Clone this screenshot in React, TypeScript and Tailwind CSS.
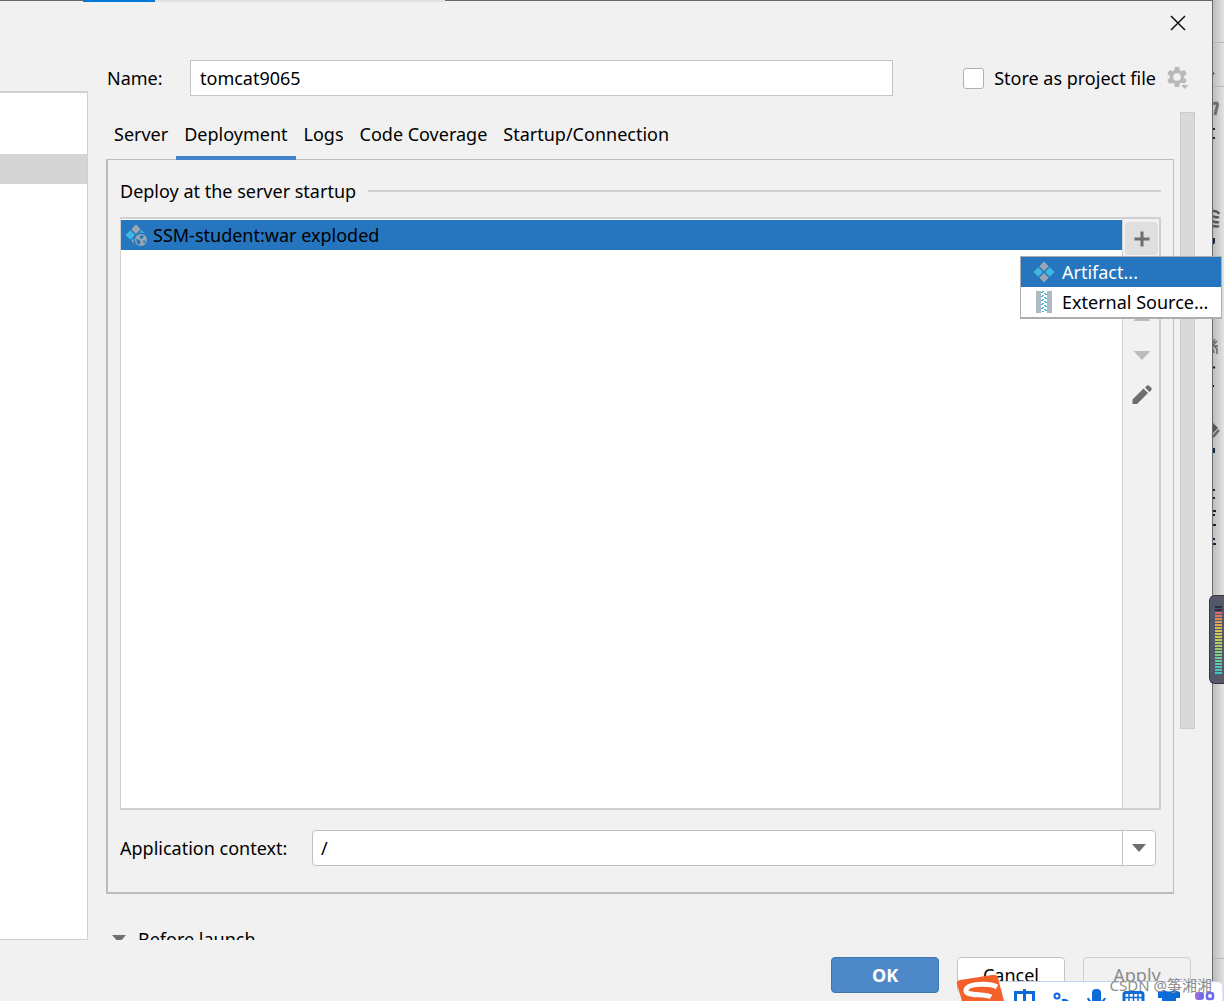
import { useState, type ReactNode } from "react";

const tabs = ["Server", "Deployment", "Logs", "Code Coverage", "Startup/Connection"];

const meterColors = [
  "bg-[#2b2e3d]",
  "bg-[#2b2e3d]",
  "bg-[#e0686a]",
  "bg-[#e07a62]",
  "bg-[#df8e58]",
  "bg-[#dd9e50]",
  "bg-[#dcab4c]",
  "bg-[#dab54a]",
  "bg-[#d8bf4a]",
  "bg-[#d2c74c]",
  "bg-[#c8cb50]",
  "bg-[#bccd56]",
  "bg-[#b0cd5e]",
  "bg-[#a4cd66]",
  "bg-[#98cd70]",
  "bg-[#8ccc7a]",
  "bg-[#80cb86]",
  "bg-[#74ca92]",
  "bg-[#68c99e]",
  "bg-[#5cc8aa]",
  "bg-[#50c7b4]",
  "bg-[#48c6bc]",
  "bg-[#44c6c0]",
];

const ArtifactIcon = ({ exploded = false }: { exploded?: boolean }) => (
  <svg className="size-[22px] shrink-0" viewBox="0 0 22 22">
    <path d="M11 .5l4.700 4.700L11 9.900 6.300 5.200z" fill="#9aa7b0" />
    <path d="M5.300 6.200l4.800 4.800-4.800 4.800L.5 11z" fill="#40b6e0" />
    <path d="M16.700 6.200l4.800 4.800-4.800 4.800-4.800-4.800z" fill="#40b6e0" />
    <path d="M11 12.100l4.700 4.700L11 21.500l-4.700-4.700z" fill="#9aa7b0" />
    {exploded && (
      <>
        <circle cx="16" cy="16" r="7.500" fill="#2675bf" />
        <circle cx="16" cy="16" r="6" fill="#9aa7b0" />
        <path
          d="M11.500 14.500l3 1.500 1 2-1 3c-2-.6-3.500-3-3-6.500zM16 11.200l3 .8-1.500 2.500-2 .5-1-2zM18 16.500l3 .5-2 3z"
          fill="#2675bf"
        />
      </>
    )}
  </svg>
);

const ArchiveIcon = () => (
  <svg className="size-[22px] shrink-0" viewBox="0 0 22 22">
    <path d="M3 0h5v22H3zM14 0h5v22h-5z" fill="#aeb9c0" />
    <path
      d="M9 .5h2M11 2.500h2M9 4.500h2M11 6.500h2M9 8.500h2M11 10.500h2M9 12.500h2M11 14.500h2M9 16.500h2M11 18.500h2M9 20.500h2M8 1.500h2M12 3.500h2M8 5.500h2M12 7.500h2M8 9.500h2M12 11.500h2M8 13.500h2M12 15.500h2M8 17.500h2M12 19.500h2"
      fill="none"
      stroke="#40b6e0"
      strokeWidth="1"
    />
  </svg>
);

const GearIcon = () => (
  <svg className="size-[22px]" viewBox="0 0 22 22">
    <g fill="#b9b9b9">
      {[0, 60, 120].map((angle) => (
        <rect key={angle} x="7.500" y="0" width="5" height="20" rx="1" transform={`rotate(${angle} 10 10)`} />
      ))}
      <circle cx="10" cy="10" r="7.300" />
    </g>
    <circle cx="10" cy="10" r="3.800" fill="#f1f1f1" />
    <path d="M12.500 16.500h10L17.500 22z" fill="#f1f1f1" />
    <path d="M14 18h7.500l-3.700 4z" fill="#b9b9b9" />
  </svg>
);

interface ToolButtonProps {
  label: string;
  active?: boolean;
  onClick?: () => void;
  children: ReactNode;
}

const ToolButton = ({ label, active = false, onClick, children }: ToolButtonProps) => (
  <button
    type="button"
    aria-label={label}
    onClick={onClick}
    className={`flex h-[33px] w-full items-center justify-center rounded ${active ? "bg-[#dfdfdf]" : ""}`}
  >
    <svg className="size-5" viewBox="0 0 20 20">
      {children}
    </svg>
  </button>
);

const AddMenu = () => (
  <ul className="absolute top-[34px] -right-16 z-20 w-[202px] border border-b-2 border-[#adadad] bg-white">
    <li>
      <button type="button" className="flex h-[30px] w-full items-center gap-[7px] bg-[#2675bf] pl-3 text-white">
        <ArtifactIcon />
        Artifact...
      </button>
    </li>
    <li>
      <button type="button" className="flex h-[30px] w-full items-center gap-[7px] pl-3">
        <ArchiveIcon />
        External Source...
      </button>
    </li>
  </ul>
);

const DeploymentPanel = () => {
  const [menuOpen, setMenuOpen] = useState(true);

  return (
    <section className="-mt-px flex min-h-0 flex-1 flex-col border border-b-2 border-l-2 border-[#bdbdbd] px-3 pt-[17px] pb-[26px]">
      <div className="flex items-center gap-3">
        <h2 className="leading-7">Deploy at the server startup</h2>
        <div className="h-[2px] flex-1 bg-[#d0d0d0]" />
      </div>

      <div className="mt-3 flex min-h-0 flex-1 border-2 border-l border-[#d0d0d0] bg-white">
        <ul className="flex-1 pt-px">
          <li className="flex h-[30px] items-center gap-[6px] bg-[#2675bf] pl-1">
            <ArtifactIcon exploded />
            SSM-student:war exploded
          </li>
        </ul>
        <div className="flex w-[37px] flex-col gap-[6px] border-l border-[#d0d0d0] bg-[#f1f1f1] pt-[3px] pr-px pl-[2px]">
          <div className="relative">
            <ToolButton label="Add" active onClick={() => setMenuOpen(!menuOpen)}>
              <path d="M8.500 2.500h3v6h6v3h-6v6h-3v-6h-6v-3h6z" fill="#6e6e6e" />
            </ToolButton>
            {menuOpen && <AddMenu />}
          </div>
          <ToolButton label="Remove">
            <path d="M2.500 8.500h15v3h-15z" fill="#6e6e6e" />
          </ToolButton>
          <ToolButton label="Move up">
            <path d="M1.500 14h17L10 5z" fill="#bcbcbc" />
          </ToolButton>
          <ToolButton label="Move down">
            <path d="M1.500 5h17L10 14z" fill="#bcbcbc" />
          </ToolButton>
          <ToolButton label="Edit">
            <path d="M.5 14.500L11.500 3.500l4.500 4.500L5 19H.5zM13 2.500l1.500-1.500q1.500-1.500 3 0l1.500 1.500q1.500 1.500 0 3L17.500 7z" fill="#6e6e6e" />
          </ToolButton>
        </div>
      </div>

      <div className="mt-5 mr-[5px] flex items-center">
        <label htmlFor="context" className="w-48 shrink-0">
          Application context:
        </label>
        <div className="flex h-9 flex-1 rounded border border-[#c0c0c0] bg-white">
          <input id="context" defaultValue="/" className="min-w-0 flex-1 rounded px-2 outline-none" />
          <button
            type="button"
            aria-label="Show contexts"
            className="flex w-[33px] items-center justify-center border-l border-[#c0c0c0]"
          >
            <svg className="h-2 w-[14px]" viewBox="0 0 14 8">
              <path d="M0 0h14L7 8z" fill="#6e6e6e" />
            </svg>
          </button>
        </div>
      </div>
    </section>
  );
};

// Sliver of the editor window that stays visible beside the dialog
const EditorEdge = () => (
  <div className="w-[11px] shrink-0 bg-linear-to-r from-[#bdbdbd] to-[#e2e2e2]">
    <svg className="h-[960px] w-[11px]" viewBox="0 0 11 960">
      <path d="M0 42.500h11M0 86.500h11M0 958.500h11" stroke="#b4b4b4" />
      <path d="M0 72l2 1.500-2 1.500z" fill="#555" />
      <path d="M0 104q6-3 4 3l-2 8" fill="none" stroke="#6e6e6e" strokeWidth="3" />
      <path d="M0 211q5 0 6 3M0 216q4 2 6 1M0 221q4 2 6 1M0 226q4 1 6 0" fill="none" stroke="#555" strokeWidth="2.500" />
      <path d="M0 343l2-4M0 345l4-4M0 346h5M1 346l3 3v5M0 349l1 4" fill="none" stroke="#666" strokeWidth="1.500" />
      <path d="M0 423l5 5-5 5z" fill="#555" />
      <path d="M0 437l6-7" stroke="#666" strokeWidth="2.500" />
      <path
        d="M0 129h2M0 138h2M1 238v4l-1 2M0 367l2 1M0 386h1M1 448v5M0 490h2M0 498h2M0 511h3M0 515h2M0 525h3M0 539h2M0 544h3"
        fill="none"
        stroke="#0b2545"
        strokeWidth="2"
      />
    </svg>
  </div>
);

const InputMethodBar = () => (
  <div className="absolute right-0 bottom-0 z-30 w-[268px]">
    <svg className="h-[26px] w-full" viewBox="0 0 268 26">
      <defs>
        <linearGradient id="toolbox" x1="0" x2="1">
          <stop offset="0" stopColor="#b06ae0" />
          <stop offset="1" stopColor="#5b6cf0" />
        </linearGradient>
      </defs>
      <path d="M10 26V6.500h251q6 0 6 6V26" fill="#fff" stroke="#bfd3ee" />
      <path d="M1 9Q0 6 4 5L36 0q5-1 6 3l6 23H6z" fill="#f4602a" />
      <path d="M41 12c-7-4-30-4-31 3s19 3 25 7" fill="none" stroke="#fff" strokeWidth="5" />
      <path d="M59.500 26v-8.500h18V26M68.500 14v12" fill="none" stroke="#0b6bd8" strokeWidth="3" />
      <circle cx="101" cy="21" r="2.500" fill="none" stroke="#0b6bd8" strokeWidth="2" />
      <path d="M106 24q4-1 7 2h-7z" fill="#0b6bd8" />
      <rect x="136" y="14" width="9" height="16" rx="4" fill="#0b6bd8" />
      <path d="M132 23q1 5 8 5t9-5" fill="none" stroke="#0b6bd8" strokeWidth="2" />
      <rect x="168" y="17.500" width="19" height="12" rx="2" fill="none" stroke="#0b6bd8" strokeWidth="3" />
      <path d="M173 18v8M177.500 18v8M182 18v8M168 22.500h19" stroke="#0b6bd8" strokeWidth="1.500" />
      <path d="M202 17l6-2q5 3 10 0l6 2v6h-4v3h-14v-3h-4z" fill="#0b6bd8" />
      <rect x="239" y="17" width="9" height="8" rx="3" fill="url(#toolbox)" />
      <rect x="251" y="18" width="6" height="6" rx="2" fill="none" stroke="#6a68ee" strokeWidth="2.500" />
    </svg>
  </div>
);

export default function App() {
  const [activeTab, setActiveTab] = useState("Deployment");

  return (
    <div className="relative flex h-screen overflow-hidden bg-[#e0e0e0] font-['Noto_Sans','Noto_Sans_CJK_SC',sans-serif] text-[18px] leading-6 text-black">
      <main className="relative z-10 flex min-w-0 flex-1 flex-col border-t border-r border-[#6a6a6a] bg-[#f1f1f1]">
        <div className="absolute -top-px left-[83px] flex h-[2px] w-[362px] bg-[#e2e2e2]">
          <div className="w-[72px] bg-[#0078d7]" />
        </div>

        <div className="flex min-h-0 flex-1">
          <aside className="flex w-[88px] shrink-0 flex-col pt-[90px]">
            <div className="flex-1 border border-t-2 border-l-0 border-[#d0d0d0] bg-white pt-[61px]">
              <div className="h-[30px] bg-[#d4d4d4]" />
            </div>
          </aside>

          <div className="flex min-w-0 flex-1 flex-col pr-[17px] pl-[18px]">
            <div className="flex h-11 items-center justify-end pr-[9px]">
              <button type="button" aria-label="Close">
                <svg className="size-4" viewBox="0 0 16 16">
                  <path d="M1 1l14 14M15 1L1 15" stroke="#111" strokeWidth="1.500" />
                </svg>
              </button>
            </div>

            <div className="mt-[15px] flex h-9 items-center pl-px pr-[6px]">
              <label htmlFor="name" className="w-[83px] shrink-0">
                Name:
              </label>
              <input
                id="name"
                defaultValue="tomcat9065"
                className="h-9 min-w-0 flex-1 border border-[#c4c4c4] bg-white px-[9px] outline-none"
              />
              <label className="ml-[70px] flex items-center gap-[10px]">
                <input type="checkbox" className="size-[21px] appearance-none rounded-[3px] border border-[#b0b0b0] bg-white" />
                Store as project file
              </label>
              <button type="button" aria-label="Storage settings" className="ml-[11px]">
                <GearIcon />
              </button>
            </div>

            <div className="mt-4 flex min-h-0 flex-1 gap-[6px]">
              <div className="flex min-w-0 flex-1 flex-col">
                <nav className="flex h-12 shrink-0">
                  {tabs.map((tab) => (
                    <button
                      key={tab}
                      type="button"
                      onClick={() => setActiveTab(tab)}
                      className={`relative z-10 border-b-4 px-2 ${
                        tab === activeTab ? "border-[#4083c9]" : "border-transparent"
                      }`}
                    >
                      {tab}
                    </button>
                  ))}
                </nav>

                <DeploymentPanel />

                <div className="h-[46px] shrink-0 overflow-hidden pt-[33px]">
                  <div className="flex items-center gap-3 pl-[6px]">
                    <svg className="h-2 w-[14px]" viewBox="0 0 14 8">
                      <path d="M0 0h14L7 8z" fill="#6e6e6e" />
                    </svg>
                    Before launch
                  </div>
                </div>
              </div>

              <div className="mb-[211px] w-[15px] border border-[#cbcbcb] bg-[#d9d9d9]" />
            </div>
          </div>
        </div>

        <footer className="flex h-[61px] shrink-0 justify-end gap-[18px] pt-[17px] pr-[21px]">
          <button type="button" className="h-9 w-[108px] rounded border border-[#3b76b3] bg-[#4d89c8] font-bold text-white">
            OK
          </button>
          <button type="button" className="h-9 w-[108px] rounded border border-[#c4c4c4] bg-white">
            Cancel
          </button>
          <button type="button" className="h-9 w-[108px] rounded border border-[#cfcfcf] text-[#8c8c8c]">
            Apply
          </button>
        </footer>
      </main>

      <EditorEdge />

      <div className="absolute right-0 bottom-[317px] z-20 flex h-[89px] w-[15px] flex-col justify-center gap-px rounded-l-md border border-r-0 border-[#33363f] bg-[#555869] pl-[5px]">
        {meterColors.map((color, index) => (
          <div key={index} className={`h-[2px] w-[7px] ${color}`} />
        ))}
      </div>

      <InputMethodBar />
      <p className="absolute right-3 bottom-1 z-40 text-[15px] text-[#8d8d8d]">CSDN @筝湘湘</p>
    </div>
  );
}
